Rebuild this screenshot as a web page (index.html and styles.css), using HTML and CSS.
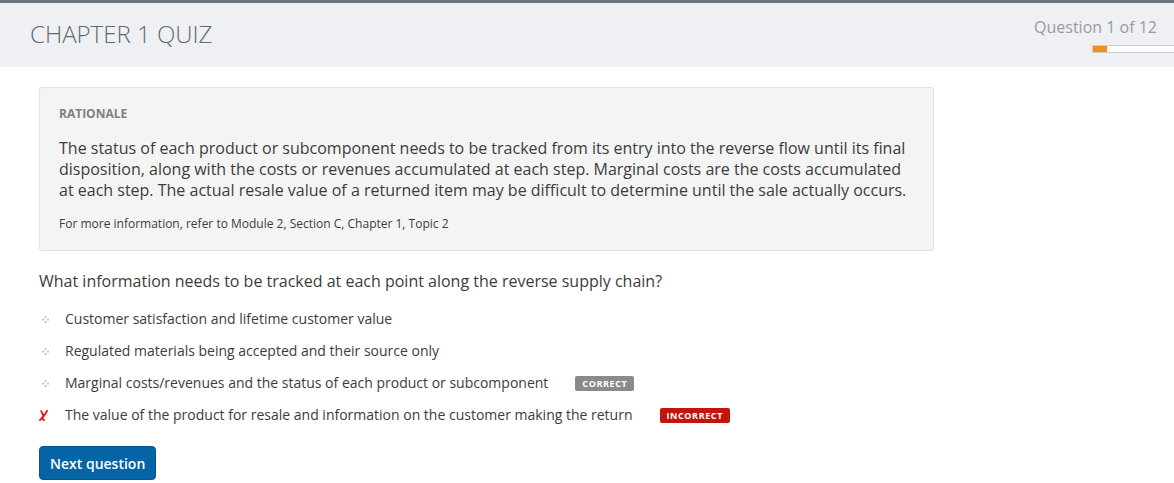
FILE: index.html
```html
<!DOCTYPE html>
<html>
<head>
<meta charset="utf-8">
<link rel="stylesheet" href="styles.css">
</head>
<body>
<header class="top">
  <h1 class="title">CHAPTER 1 QUIZ</h1>
  <div class="progress-area">
    <div class="qcount">Question 1 of 12</div>
    <div class="bar"><div class="bar-fill" style="width:14px"></div></div>
  </div>
</header>
<main class="content">
  <section class="rationale">
    <h2 class="rat-head">RATIONALE</h2>
    <p class="rat-text">The status of each product or subcomponent needs to be tracked from its entry into the reverse flow until its final disposition, along with the costs or revenues accumulated at each step. Marginal costs are the costs accumulated at each step. The actual resale value of a returned item may be difficult to determine until the sale actually occurs.</p>
    <p class="rat-ref">For more information, refer to Module 2, Section C, Chapter 1, Topic 2</p>
  </section>
  <p class="question">What information needs to be tracked at each point along the reverse supply chain?</p>
  <ul class="options">
    <li class="opt"><span class="mark"><svg width="7" height="7" viewBox="0 0 7 7"><rect x="2.5" y="0" width="2" height="2" fill="#c4c4c4"/><rect x="0" y="2.5" width="2" height="2" fill="#c4c4c4"/><rect x="5" y="2.5" width="2" height="2" fill="#c4c4c4"/><rect x="2.5" y="5" width="2" height="2" fill="#c4c4c4"/></svg></span><span class="opt-text">Customer satisfaction and lifetime customer value</span></li>
    <li class="opt"><span class="mark"><svg width="7" height="7" viewBox="0 0 7 7"><rect x="2.5" y="0" width="2" height="2" fill="#c4c4c4"/><rect x="0" y="2.5" width="2" height="2" fill="#c4c4c4"/><rect x="5" y="2.5" width="2" height="2" fill="#c4c4c4"/><rect x="2.5" y="5" width="2" height="2" fill="#c4c4c4"/></svg></span><span class="opt-text">Regulated materials being accepted and their source only</span></li>
    <li class="opt"><span class="mark"><svg width="7" height="7" viewBox="0 0 7 7"><rect x="2.5" y="0" width="2" height="2" fill="#c4c4c4"/><rect x="0" y="2.5" width="2" height="2" fill="#c4c4c4"/><rect x="5" y="2.5" width="2" height="2" fill="#c4c4c4"/><rect x="2.5" y="5" width="2" height="2" fill="#c4c4c4"/></svg></span><span class="opt-text">Marginal costs/revenues and the status of each product or subcomponent</span><span class="badge badge-correct">CORRECT</span></li>
    <li class="opt"><span class="mark"><svg width="9" height="11" viewBox="0 0 9 11"><path d="M2.2 1.2 C3.2 3.5 3.8 4.6 4.4 5.6 C3.4 7.4 2.3 8.8 1 10.2 M8.2 0.8 C6.6 3.5 5.2 5.6 3.2 8.2 C3.8 9 4.4 9.6 5 10.2" stroke="#e8141a" stroke-width="1.8" fill="none" stroke-linecap="round"/></svg></span><span class="opt-text">The value of the product for resale and information on the customer making the return</span><span class="badge badge-incorrect">INCORRECT</span></li>
  </ul>
  <button class="next">Next question</button>
</main>
</body>
</html>
```

FILE: styles.css
```css
html, body {
  margin: 0;
  padding: 0;
}
body {
  font-family: "Open Sans", "Liberation Sans", sans-serif;
  color: #333;
  background: #fff;
  overflow: hidden;
  width: 1174px;
  height: 483px;
}
.top {
  border-top: 3px solid #67737d;
  background: #eff0f3;
  display: flex;
  justify-content: space-between;
  align-items: flex-start;
  box-sizing: border-box;
  height: 67px;
  padding-right: 17px;
}
.title {
  margin: 16px 0 0 30px;
  font-weight: 300;
  font-size: 24px;
  line-height: 30px;
  color: #5f6a75;
}
.progress-area {
  display: flex;
  flex-direction: column;
  align-items: flex-end;
  padding-top: 13px;
}
.qcount {
  font-size: 16px;
  line-height: 22px;
  color: #9a9ba0;
}
.bar {
  margin-top: 7px;
  margin-right: -40px;
  width: 104px;
  height: 6px;
  background: #fff;
  border: 1px solid #cfcfcf;
  border-right: none;
}
.bar-fill {
  height: 100%;
  background: #f39019;
}
.content {
  padding: 20px 0 0 39px;
}
.rationale {
  width: 895px;
  box-sizing: border-box;
  background: #f4f4f4;
  border: 1px solid #e2e2e2;
  border-radius: 3px;
  padding: 17px 19px 17px;
}
.rat-head {
  margin: 0;
  font-size: 12px;
  font-weight: 700;
  line-height: 18px;
  color: #808080;
}
.rat-text {
  margin: 15px 0 0;
  font-size: 16px;
  line-height: 21px;
  color: #3c3c3c;
}
.rat-ref {
  margin: 14px 0 0;
  font-size: 12px;
  line-height: 18px;
  color: #3c3c3c;
}
.question {
  margin: 19px 0 0;
  font-size: 16px;
  line-height: 22px;
  color: #3c3c3c;
}
.options {
  list-style: none;
  margin: 11px 0 0;
  padding: 0;
}
.opt {
  display: flex;
  align-items: center;
  height: 32px;
  font-size: 14px;
  color: #3c3c3c;
}
.mark {
  width: 26px;
  display: flex;
  align-items: center;
  padding-left: 3px;
  box-sizing: border-box;
}
.opt:last-child .mark {
  padding-left: 1px;
  margin-left: -1px;
  width: 27px;
}
.opt-text {
  line-height: 20px;
}
.badge {
  margin-left: 27px;
  font-size: 9px;
  font-weight: 700;
  letter-spacing: 0.6px;
  color: #fff;
  line-height: 15px;
  padding: 0 7px;
  border-radius: 2px;
}
.badge-correct {
  background: #8a8a8a;
}
.badge-incorrect {
  background: #c4140b;
}
.next {
  margin-top: 15px;
  font-family: "Open Sans", "Liberation Sans", sans-serif;
  font-size: 14px;
  font-weight: 600;
  color: #fff;
  background: #0564a6;
  border: 1px solid #04558e;
  border-radius: 4px;
  padding: 0 10px;
  height: 34px;
  cursor: pointer;
}
```
